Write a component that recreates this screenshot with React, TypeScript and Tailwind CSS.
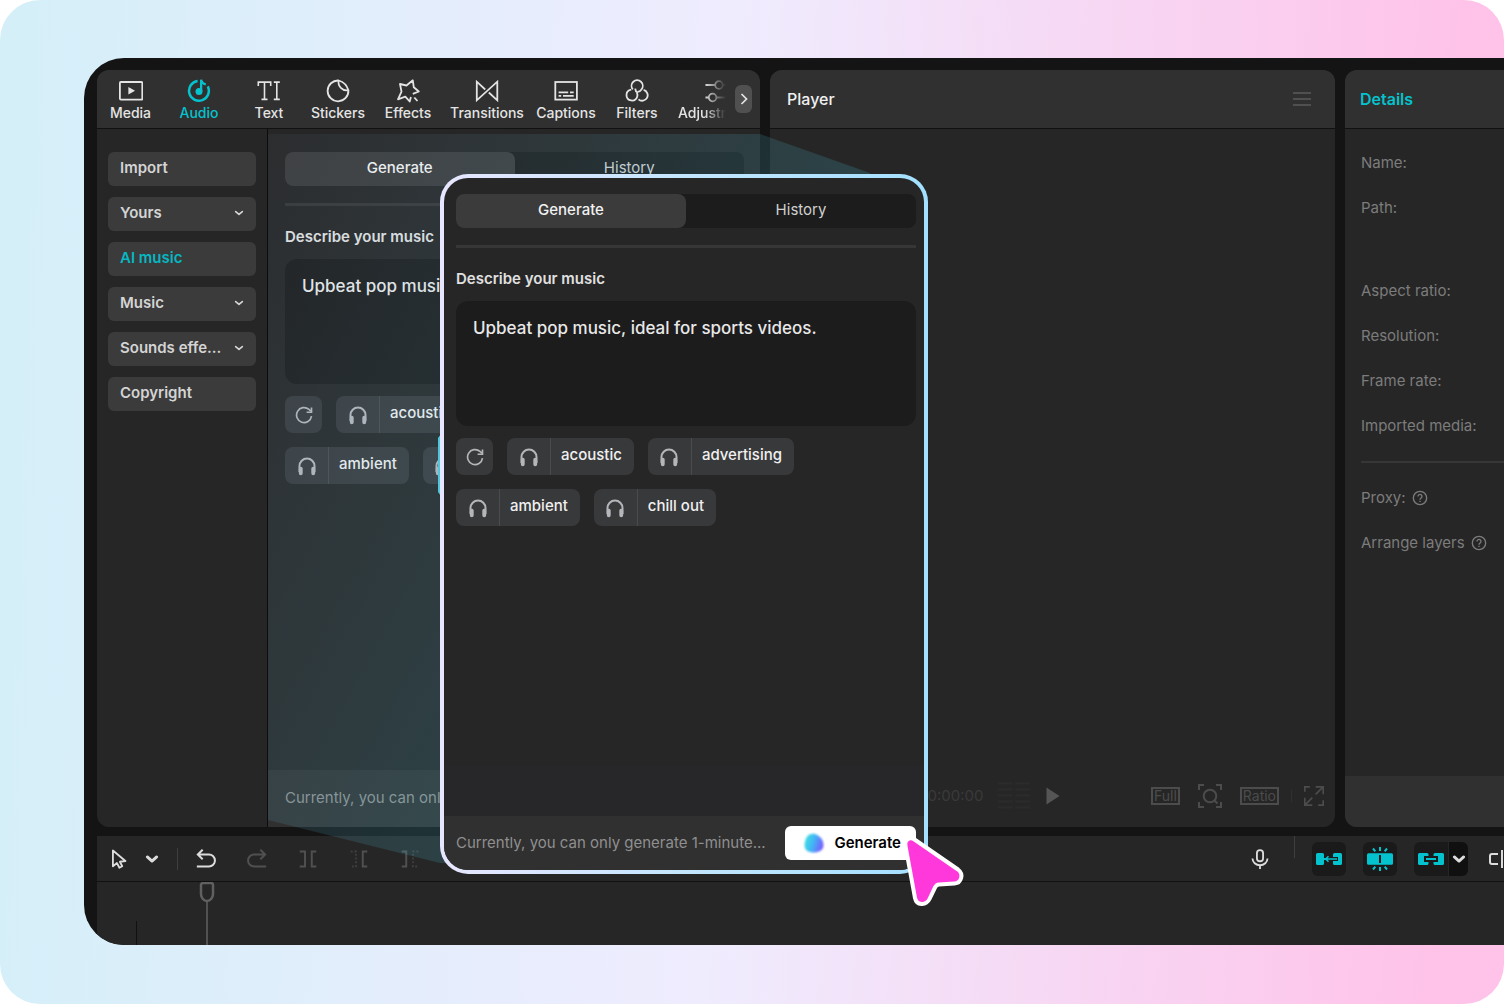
import { useId, useState } from 'react'
import type { ReactNode } from 'react'

interface IconProps {
  children: ReactNode
  size?: number
  className?: string
}

function Icon({ children, size = 24, className = '' }: IconProps) {
  return (
    <svg
      width={size}
      height={size}
      viewBox="0 0 24 24"
      fill="none"
      stroke="currentColor"
      strokeWidth="1.8"
      aria-hidden="true"
      className={`shrink-0 ${className}`}
    >
      {children}
    </svg>
  )
}

const MediaIcon = () => (
  <Icon>
    <rect x="0.9" y="3" width="22.4" height="17.6" rx="1" />
    <path d="M9.4 8v7.600l6.600-3.800z" fill="currentColor" stroke="none" />
  </Icon>
)

const AudioIcon = () => (
  <Icon>
    <path d="M10.6 2A9.9 9.9 0 1 0 20.8 7.4" strokeWidth="2.5" />
    <circle cx="12" cy="12.4" r="3.5" fill="currentColor" stroke="none" />
    <path d="M14.1 12.4V.8c.5 2.6 2 4 4.7 4.7" strokeWidth="2.3" />
  </Icon>
)

const TextIcon = () => (
  <Icon>
    <path
      d="M1.3 7V3.1h12.4V7M7.5 3.1v17.3M4.5 20.4h6M16.8 3.1h6M16.8 20.4h6M19.8 3.1v17.3"
      strokeWidth="1.6"
    />
  </Icon>
)

const StickersIcon = () => (
  <Icon>
    <path d="M12.6 1.5A10.4 10.4 0 1 0 22.4 11.3z" stroke="none" />
    <path d="M12.6 1.5A10.4 10.4 0 1 0 22.4 11.3C21 6.5 17.8 3 12.6 1.5z" strokeLinejoin="round" />
    <path d="M12.6 1.5c-1 5.4 3.7 10.7 9.8 9.8" />
  </Icon>
)

const EffectsIcon = () => (
  <Icon>
    <path
      d="M16.800 14.900l6-2.400-5-4.200-1-7-6.300 5.200L4 5l1.500 7.600-3.500 7.700 7.300-2.600 4.400 4.800 1.200-4.500"
      strokeLinejoin="round"
    />
    <path d="M18.300 18.500l3.200 3.500" />
  </Icon>
)

const TransitionsIcon = () => (
  <Icon>
    <path d="M10.2 10.5L1.800 2.700v18.600L22.300 2.700v18.600l-8.500-7.800" />
  </Icon>
)

const CaptionsIcon = () => (
  <Icon>
    <rect x="1.3" y="3" width="21.6" height="17.6" />
    <path d="M4.600 13.400h9.600M16 13.400h3.700M4.600 16.900h2.600M9 16.900h10.700" strokeWidth="1.600" />
  </Icon>
)

const FiltersIcon = () => (
  <Icon>
    <path d="M7.800 10.400A5.600 5.600 0 1 1 16.500 10.400C15.500 11.800 14 12.600 12.500 12.800" />
    <path d="M6.200 10.600a5.500 5.500 0 1 0 6 7.200c.4-1.200.300-2.600-.2-3.900" />
    <path d="M18.600 10.900A5.500 5.500 0 1 1 13.500 20.300M10.200 9.600c.100 1.700 1 3.300 2.600 4.200" />
  </Icon>
)

const AdjustIcon = () => (
  <Icon>
    <path d="M1.500 6h9.500M19 6h4M1.500 18.500h3M12.500 18.500h10.500" />
    <circle cx="15" cy="6" r="3.800" />
    <circle cx="8.600" cy="18.500" r="3.800" />
  </Icon>
)

const ChevronDown = ({ size = 10, bold = false }: { size?: number; bold?: boolean }) => (
  <Icon size={size}>
    <path d="M4 8.500l8 7 8-7" strokeWidth={bold ? 5 : 4} strokeLinecap="round" strokeLinejoin="round" />
  </Icon>
)

const HeadphonesIcon = () => (
  <Icon size={22} className="text-[#b4b6b9]">
    <path d="M3.8 18.5V12a8.2 8.2 0 0 1 16.4 0v6.5" strokeWidth="2.2" />
    <path d="M5.2 14.8v5.200M18.800 14.800v5.200" strokeWidth="4.200" strokeLinecap="round" />
  </Icon>
)

const RefreshIcon = () => (
  <Icon size={18} className="text-[#b4b6b9]">
    <path d="M22 13.500A10 10 0 1 1 18.600 4.500l2.700 2.400" strokeWidth="2.200" />
    <path d="M22 2v6.300h-6.500" strokeWidth="2.200" />
  </Icon>
)

const HelpIcon = () => (
  <Icon size={16}>
    <circle cx="12" cy="12" r="10" strokeWidth="2" />
    <path d="M9 9.800a3 3 0 1 1 4.700 2.300c-1.200.8-1.700 1.200-1.700 2.400M12 16v1.900" strokeWidth="2" />
  </Icon>
)

const tabs = [
  { label: 'Media', icon: <MediaIcon />, className: 'w-[67px]' },
  { label: 'Audio', icon: <AudioIcon />, className: 'w-[70px] text-[#05c3ce]' },
  { label: 'Text', icon: <TextIcon />, className: 'w-[70px]' },
  { label: 'Stickers', icon: <StickersIcon />, className: 'w-[68px]' },
  { label: 'Effects', icon: <EffectsIcon />, className: 'w-[72px]' },
  { label: 'Transitions', icon: <TransitionsIcon />, className: 'w-[86px]' },
  { label: 'Captions', icon: <CaptionsIcon />, className: 'w-[72px]' },
  { label: 'Filters', icon: <FiltersIcon />, className: 'w-[70px]' },
]

const menu = [
  { label: 'Import', expandable: false },
  { label: 'Yours', expandable: true },
  { label: 'AI music', expandable: false },
  { label: 'Music', expandable: true },
  { label: 'Sounds effe...', expandable: true },
  { label: 'Copyright', expandable: false },
]

const tags = ['acoustic', 'advertising', 'ambient', 'chill out']

function MusicForm() {
  const id = useId()
  const [prompt, setPrompt] = useState('Upbeat pop music, ideal for sports videos.')

  return (
    <div className="flex flex-col">
      <div className="flex h-[34px] rounded-lg bg-[#1c1c1c] pb-px text-[15px]">
        <button className="-mb-px flex-1 rounded-lg bg-[#3b3b3b] pb-[2px] font-medium text-[#f2f2f2]">Generate</button>
        <button className="flex-1 text-[#d0d0d0]">History</button>
      </div>
      <div className="mt-[17px] h-[3px] bg-[#363636]" />
      <label htmlFor={id} className="mt-[21px] text-[15px] leading-5 font-semibold text-[#e0e0e0]">
        Describe your music
      </label>
      <textarea
        id={id}
        value={prompt}
        onChange={(e) => setPrompt(e.target.value)}
        className="mt-3 h-[125px] resize-none rounded-xl bg-[#1c1c1c] px-[17px] py-4 text-[17px] leading-[22px] font-medium text-[#e8e8e8] outline-none"
      />
      <div className="mt-3 flex flex-wrap gap-[14px] text-[15px] text-[#f0f0f0]">
        <button aria-label="Refresh" className="flex h-[37px] w-[37px] items-center justify-center rounded-lg bg-[#38393b]">
          <RefreshIcon />
        </button>
        {tags.map((tag) => (
          <button key={tag} className="flex h-[37px] items-center rounded-lg bg-[#38393b]">
            <span className="flex h-full w-11 items-center justify-center border-r border-[#4a4b4d]">
              <HeadphonesIcon />
            </span>
            <span className="pr-3 pb-[2px] pl-[10px] font-medium">{tag}</span>
          </button>
        ))}
      </div>
    </div>
  )
}

function LibraryPanel() {
  return (
    <section className="flex w-[663px] shrink-0 flex-col overflow-hidden rounded-xl bg-[#262626]">
      <nav className="flex h-[59px] shrink-0 items-center border-b border-[#111] bg-[#303030] text-sm font-medium text-[#e4e4e4]">
        {tabs.map((tab) => (
          <button key={tab.label} className={`flex shrink-0 flex-col items-center pt-1 ${tab.className}`}>
            {tab.icon}
            <span className="leading-5">{tab.label}</span>
          </button>
        ))}
        <button className="flex w-[54px] shrink-0 flex-col overflow-hidden pt-1 pl-[6px] [mask-image:linear-gradient(to_right,#000_60%,transparent)]">
          <span className="pl-[26px]"><AdjustIcon /></span>
          <span className="leading-5">Adjustment</span>
        </button>
        <button aria-label="More tabs" className="ml-[9px] flex h-7 w-[17px] shrink-0 items-center justify-center rounded-md bg-[#505050]">
          <Icon size={12}>
            <path d="M7 2l10 10L7 22" strokeWidth="3.500" />
          </Icon>
        </button>
      </nav>
      <div className="flex min-h-0 flex-1">
        <aside className="flex w-[171px] shrink-0 flex-col gap-[11px] border-r border-[#0c0c0c] pt-[23px] pr-[11px] pl-[11px]">
          {menu.map((item) => (
            <button
              key={item.label}
              className={`flex h-[34px] items-center justify-between rounded-md bg-[#3b3b3b] px-3 pb-[2px] text-[15px] font-semibold ${
                item.label === 'AI music' ? 'text-[#05b8c2]' : 'text-[#d4d4d4]'
              }`}
            >
              {item.label}
              {item.expandable && <ChevronDown />}
            </button>
          ))}
        </aside>
        <div className="flex min-w-0 flex-1 flex-col">
          <div className="flex-1 pt-[23px] pr-4 pl-[17px]">
            <MusicForm />
          </div>
          <footer className="flex h-[57px] items-center bg-[#303030] px-[17px] text-[15px] text-[#8f8f8f]">
            Currently, you can only generate 1-minute...
          </footer>
        </div>
      </div>
    </section>
  )
}

function PlayerPanel() {
  return (
    <section className="flex min-w-0 flex-1 flex-col overflow-hidden rounded-xl bg-[#262626]">
      <header className="flex h-[59px] shrink-0 items-center justify-between border-b border-[#111] bg-[#303030] pr-6 pl-[17px]">
        <h2 className="text-base font-medium text-[#f0f0f0]">Player</h2>
        <button aria-label="Player menu" className="flex w-[18px] flex-col gap-1 text-[#505050]">
          <span className="h-[2px] bg-current" />
          <span className="h-[2px] bg-current" />
          <span className="h-[2px] bg-current" />
        </button>
      </header>
      <div className="flex-1" />
      <footer className="grid h-[62px] grid-cols-[1fr_auto_1fr] items-center gap-4 px-[11px] text-[#4c4c4c]">
        <div className="flex items-center justify-end gap-[14px]">
          <span className="text-[15px] text-[#3a3a3a]">00:00:00:00</span>
          <Icon size={32} className="text-[#2b2b2b]">
            <path d="M0 2.500h11M0 7h11M0 11.500h11M0 16h11M0 20.500h11M13 2.500h11M13 7h11M13 11.500h11M13 16h11M13 20.500h11" />
          </Icon>
        </div>
        <button aria-label="Play" className="text-[#555]">
          <svg width="14" height="18" viewBox="0 0 14 18" aria-hidden="true">
            <path d="M.5.5v17l13-8.500z" fill="currentColor" />
          </svg>
        </button>
        <div className="flex items-center justify-end">
          <button className="border-2 border-current px-px text-sm leading-[14px]">Full</button>
          <button aria-label="Fit" className="ml-[18px]">
            <Icon>
              <path d="M1 6V1h5M18 1h5v5M23 18v5h-5M6 23H1v-5" strokeWidth="2" />
              <circle cx="12" cy="12" r="6.3" strokeWidth="2" />
              <path d="M16 16l3.5 3.5" strokeWidth="2" />
            </Icon>
          </button>
          <button className="ml-[18px] border-2 border-current px-px text-sm leading-[14px]">Ratio</button>
          <span className="ml-3 h-3 w-px bg-[#303030]" />
          <button aria-label="Full screen" className="ml-3">
            <Icon size={20}>
              <path d="M1 7V1h6M23 17v6h-6M14 1h9v9M23 1l-9 9M1 14v9h9M1 23l9-9" strokeWidth="2" />
            </Icon>
          </button>
        </div>
      </footer>
    </section>
  )
}

function DetailsPanel() {
  return (
    <section className="flex w-[159px] shrink-0 flex-col overflow-hidden rounded-l-xl bg-[#262626]">
      <header className="flex h-[59px] shrink-0 items-center border-b border-[#111] bg-[#303030] pl-[15px]">
        <h2 className="text-base font-semibold text-[#05c3ce]">Details</h2>
      </header>
      <div className="flex flex-1 flex-col gap-[25px] pt-6 pl-4 text-[15px] leading-5 whitespace-nowrap text-[#7c7c7c]">
        <p>Name:</p>
        <p className="h-[58px]">Path:</p>
        <p>Aspect ratio:</p>
        <p>Resolution:</p>
        <p>Frame rate:</p>
        <p>Imported media:</p>
        <hr className="border-t-2 border-[#363636]" />
        <p className="flex items-center gap-[6px]">Proxy: <HelpIcon /></p>
        <p className="flex items-center gap-[6px]">Arrange layers <HelpIcon /></p>
      </div>
      <div className="h-[51px] bg-[#303030]" />
    </section>
  )
}

function Timeline() {
  return (
    <section className="flex h-[109px] shrink-0 flex-col overflow-hidden bg-[#262626]">
      <div className="flex h-[46px] shrink-0 items-center overflow-hidden border-b border-[#111] pl-[13px] text-[#dcdcdc]">
        <button aria-label="Select" className="w-5">
          <Icon size={20}>
            <path d="M3.500 1.800v19l4.800-4 3 5.700 3.400-1.800-2.800-5.400 6.600-.9z" strokeWidth="2.200" strokeLinejoin="round" />
          </Icon>
        </button>
        <button aria-label="Select options" className="ml-[15px]"><ChevronDown size={14} bold /></button>
        <span className="ml-[18px] h-[22px] w-px bg-[#3e3e3e]" />
        <button aria-label="Undo" className="ml-[18px]">
          <Icon size={20}>
            <path d="M1 21h14.500a7.250 7.250 0 0 0 0-14.500H2.500M8 .8L2.200 6.500 8 12.200" strokeWidth="2.400" />
          </Icon>
        </button>
        <button aria-label="Redo" className="ml-[31px] text-[#505050]">
          <Icon size={20}>
            <path d="M23 21H8.500a7.250 7.250 0 0 1 0-14.500h13M16 .8l5.800 5.700L16 12.200" strokeWidth="2.400" />
          </Icon>
        </button>
        <button aria-label="Split" className="ml-8 text-[#505050]">
          <Icon size={18}>
            <path d="M1 2h7v20H1M23 2h-6v20h6" strokeWidth="2.600" />
          </Icon>
        </button>
        <button aria-label="Delete left" className="ml-[33px] text-[#505050]">
          <Icon size={18}>
            <path d="M1 2h7v20H1" strokeWidth="2.400" strokeDasharray="2.500 2.500" opacity=".6" />
            <path d="M23 2h-6v20h6" strokeWidth="2.600" />
          </Icon>
        </button>
        <button aria-label="Delete right" className="ml-[33px] text-[#505050]">
          <Icon size={18}>
            <path d="M1 2h6v20H1" strokeWidth="2.600" />
            <path d="M23 2h-7v20h7" strokeWidth="2.400" strokeDasharray="2.500 2.500" opacity=".6" />
          </Icon>
        </button>

        <div className="ml-auto flex h-full items-center">
          <button aria-label="Record" className="mr-6">
            <Icon size={20}>
              <rect x="8.300" y="1.300" width="7.400" height="13.400" rx="3.700" strokeWidth="2.200" />
              <path d="M3 11.500a9 8 0 0 0 18 0M12 19.500V24" strokeWidth="2.200" />
            </Icon>
          </button>
          <span className="h-[22px] w-px self-start bg-[#3e3e3e]" />
          <button aria-label="Main track magnet" className="ml-[17px] flex h-[34px] w-[34px] items-center justify-center rounded-md bg-[#1a1a1a] text-[#05c3ce]">
            <svg width="26" height="12" viewBox="0 0 26 12" fill="currentColor" aria-hidden="true">
              <path d="M1.500 0h5A1.500 1.500 0 0 1 8 1.500V5h3v2H8v3.500A1.500 1.500 0 0 1 6.500 12h-5A1.500 1.500 0 0 1 0 10.500v-9A1.500 1.500 0 0 1 1.500 0z" />
              <path d="M18.500 0h6A1.500 1.500 0 0 1 26 1.500v9a1.500 1.500 0 0 1-1.500 1.500h-6a1.500 1.500 0 0 1-1.500-1.500V8h5V4h-5V1.500A1.500 1.500 0 0 1 18.500 0z" />
              <path d="M21 6H10M12.500 3.300L9.800 6l2.700 2.700" fill="none" stroke="currentColor" strokeWidth="1.600" />
            </svg>
          </button>
          <button aria-label="Auto snapping" className="ml-[17px] flex h-[34px] w-[34px] items-center justify-center rounded-md bg-[#1a1a1a] text-[#05c3ce]">
            <svg width="26" height="24" viewBox="0 0 26 24" fill="currentColor" aria-hidden="true">
              <path
                fillRule="evenodd"
                d="M1.500 6.200h23A1.500 1.500 0 0 1 26 7.700v8.600a1.500 1.500 0 0 1-1.500 1.500h-23A1.500 1.500 0 0 1 0 16.300V7.700a1.500 1.500 0 0 1 1.500-1.500zM12 8v8h2V8z"
              />
              <path d="M13 0v4M13 20v4M6 1.500l2.300 2.800M20 1.500l-2.300 2.800M6 22.500l2.300-2.800M20 22.500l-2.300-2.800" stroke="currentColor" strokeWidth="2" />
            </svg>
          </button>
          <button aria-label="Linkage" className="ml-[17px] flex h-[34px] w-[34px] items-center justify-center rounded-l-md bg-[#1a1a1a] text-[#05c3ce]">
            <svg width="26" height="12" viewBox="0 0 26 12" fill="currentColor" aria-hidden="true">
              <path d="M1.500 0H9a1.500 1.500 0 0 1 1.500 1.500V3H6v6h4.500v1.500A1.500 1.500 0 0 1 9 12H1.500A1.500 1.500 0 0 1 0 10.500v-9A1.500 1.500 0 0 1 1.500 0zM24.500 0H17a1.500 1.500 0 0 0-1.500 1.500V3H20v6h-4.500v1.500A1.500 1.500 0 0 0 17 12h7.500a1.500 1.500 0 0 0 1.500-1.500v-9A1.500 1.500 0 0 0 24.500 0z" />
              <path d="M8 5h10v2H8z" />
            </svg>
          </button>
          <button aria-label="Linkage options" className="ml-px flex h-[34px] w-[19px] items-center justify-center rounded-r-md bg-[#101010]">
            <ChevronDown size={14} bold />
          </button>
          <button aria-label="Preview axis" className="ml-[20px] w-4 overflow-hidden">
            <svg width="16" height="20" viewBox="0 0 16 20" fill="none" stroke="currentColor" strokeWidth="2" aria-hidden="true">
              <path d="M10 5H4a2 2 0 0 0-2 2v6a2 2 0 0 0 2 2h6M14 1v18" />
            </svg>
          </button>
        </div>
      </div>
      <div className="relative flex-1">
        <span className="absolute bottom-0 left-[39px] h-6 w-px bg-[#111]" />
        <svg width="16" height="64" viewBox="0 0 16 64" fill="none" stroke="#606060" className="absolute top-0 left-[102px]" aria-hidden="true">
          <path d="M2 3a2 2 0 0 1 2-2h8a2 2 0 0 1 2 2v9c0 4-3 7-6 7s-6-3-6-7z" strokeWidth="2.500" />
          <path d="M8 19v45" strokeWidth="1.500" />
        </svg>
      </div>
    </section>
  )
}

// Light cone that runs from the music panel out to the enlarged dialog
function Beam() {
  return (
    <svg width="700" height="740" viewBox="0 0 700 740" className="pointer-events-none absolute top-[76px] left-[184px]" aria-hidden="true">
      <defs>
        <linearGradient id="beam" gradientUnits="userSpaceOnUse" x1="0" y1="0" x2="480" y2="260">
          <stop offset="0" stopColor="#8fb4d8" stopOpacity="0.05" />
          <stop offset="1" stopColor="#40b8cc" stopOpacity="0.2" />
        </linearGradient>
      </defs>
      <path d="M0 0H492L602 39V740L172 729L0 686Z" fill="url(#beam)" />
      <path d="M170 304q3-3 4-8v70q-1-5-4-8z" fill="#4fc6dc" />
    </svg>
  )
}

function Blob() {
  return (
    <svg width="22" height="22" viewBox="0 0 22 22" aria-hidden="true">
      <defs>
        <linearGradient id="blob" x1="0" y1="0.3" x2="1" y2="0.6">
          <stop offset="0" stopColor="#3fe0e2" />
          <stop offset="0.45" stopColor="#3fb8f4" />
          <stop offset="1" stopColor="#7a58ff" />
        </linearGradient>
        <filter id="soft">
          <feGaussianBlur stdDeviation="0.8" />
        </filter>
      </defs>
      <path
        d="M4.500 4C7 1.500 12 1 15 3.500c3.500 2 5.500 5.500 5.500 9.500 0 4.500-3 7-9 7.500-6 0-9.500-2-10-6.500C1.500 10 2.500 6.500 4.500 4z"
        fill="url(#blob)"
        filter="url(#soft)"
      />
    </svg>
  )
}

function MusicDialog() {
  return (
    <div className="absolute top-[116px] bottom-[71px] left-[356px] w-[488px] rounded-[28px] bg-gradient-to-r from-[#e8e6ff] via-[#c4e6ff] to-[#a3e0ff] p-1">
      <div className="flex h-full flex-col overflow-hidden rounded-3xl bg-[#262626]">
        <div className="flex-1 pt-4 pr-2 pl-3">
          <MusicForm />
        </div>
        <div className="h-[50px] bg-[#27272a]" />
        <footer className="flex h-[54px] items-center justify-between bg-[#303030] pr-2 pl-3">
          <p className="text-[15px] whitespace-nowrap text-[#8f8f8f]">Currently, you can only generate 1-minute...</p>
          <button className="flex h-[34px] w-[131px] items-center justify-end gap-[9px] rounded-md bg-white pr-[15px] text-[15px] font-semibold text-black">
            <Blob />
            Generate
          </button>
        </footer>
      </div>
      <svg width="80" height="90" viewBox="0 0 80 90" className="absolute -right-[52px] -bottom-[46px]" aria-hidden="true">
        <path
          d="M5.500 16C4 10 9.500 6.500 14.500 9.500L58 39.500C64 44 61.500 53 54.500 53.500L39 54.500C37 54.600 36 55.500 35 57.500L29.500 69C26 76 16.500 75.500 15 68Z"
          fill="#ff38dc"
          stroke="#fff"
          strokeWidth="4"
          strokeLinejoin="round"
        />
      </svg>
    </div>
  )
}

export default function App() {
  return (
    <div className="min-h-screen bg-white font-['Inter','Liberation_Sans',sans-serif]">
      <div className="flex min-h-screen overflow-hidden rounded-[40px] bg-[linear-gradient(92deg,#d5eff9_2%,#efecfe_48%,#ffc2e8_96%)] pt-[58px] pb-[59px] pl-[84px]">
        <main className="relative flex min-w-0 flex-1 flex-col gap-[9px] overflow-hidden rounded-l-[40px] bg-[#141414] pt-3 pl-[13px]">
          <div className="flex min-h-0 flex-1 gap-[10px]">
            <LibraryPanel />
            <PlayerPanel />
            <DetailsPanel />
          </div>
          <Timeline />
          <Beam />
          <MusicDialog />
        </main>
      </div>
    </div>
  )
}
